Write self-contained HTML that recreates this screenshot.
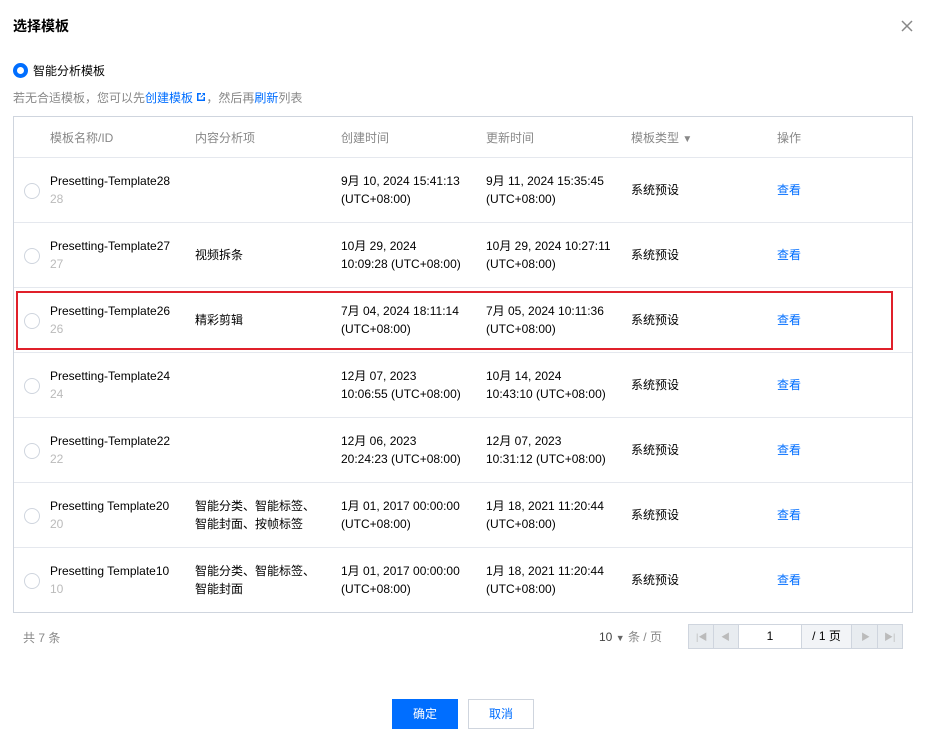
<!DOCTYPE html><html><head><meta charset="utf-8"><style>
*{margin:0;padding:0;box-sizing:border-box}
body{width:930px;height:744px;background:#fff;font-family:"Liberation Sans","Noto Sans CJK SC",sans-serif;font-size:12px;color:#000;position:relative;overflow:hidden}
.a{position:absolute;white-space:nowrap}
.g{color:#888}.b{color:#006eff}
.tbl{position:absolute;left:13px;top:116px;width:900px;height:497px;border:1px solid #cfd5de}
.row{position:absolute;left:0;width:898px;height:65px;border-top:1px solid #e5e8ee}
.row .r{position:absolute;left:10px;top:25px;width:16px;height:16px;border:1px solid #cfd5de;border-radius:50%}
.row .c{position:absolute;line-height:18px;top:14px}
.hd{position:absolute;top:12px;color:#888}
.pg{position:absolute;top:624px;height:25px;border:1px solid #cfd5de;background:#e8ecf0}
</style></head><body>
<div class="a" style="left:13px;top:16px;font-size:14px;font-weight:bold">选择模板</div>
<svg class="a" style="left:901px;top:20px" width="12" height="12" viewBox="0 0 12 12"><path d="M1 1L11 11M11 1L1 11" stroke="#888" stroke-width="1.5"/></svg>
<div class="a" style="left:13px;top:63px;width:15px;height:15px;border-radius:50%;border:4px solid #006eff"></div>
<div class="a" style="left:33px;top:62px">智能分析模板</div>
<div class="a g" style="left:13px;top:89px">若无合适模板，您可以先<span class="b">创建模板 <svg width="10" height="10" viewBox="0 0 10 10"><path d="M1 1h4v1.5H2.5v5h5V5H9v4H1z M6 1h3v3L7.8 2.8 5 5.6 4.4 5 7.2 2.2z" fill="#006eff"/></svg></span>，然后再<span class="b">刷新</span>列表</div>
<div class="tbl">
<div class="hd" style="left:36px">模板名称/ID</div><div class="hd" style="left:181px">内容分析项</div><div class="hd" style="left:327px">创建时间</div><div class="hd" style="left:472px">更新时间</div><div class="hd" style="left:617px">模板类型 <span style="font-size:10px">▼</span></div><div class="hd" style="left:763px">操作</div>
<div class="row" style="top:40px"><div class="r"></div><div class="c" style="left:36px">Presetting-Template28<br><span class="g" style="color:#bbb">28</span></div><div class="c" style="left:327px">9月 10, 2024 15:41:13<br>(UTC+08:00)</div><div class="c" style="left:472px">9月 11, 2024 15:35:45<br>(UTC+08:00)</div><div class="c" style="left:617px;top:23px">系统预设</div><div class="c b" style="left:763px;top:23px">查看</div></div>
<div class="row" style="top:105px"><div class="r"></div><div class="c" style="left:36px">Presetting-Template27<br><span style="color:#bbb">27</span></div><div class="c" style="left:181px;top:23px">视频拆条</div><div class="c" style="left:327px">10月 29, 2024<br>10:09:28 (UTC+08:00)</div><div class="c" style="left:472px">10月 29, 2024 10:27:11<br>(UTC+08:00)</div><div class="c" style="left:617px;top:23px">系统预设</div><div class="c b" style="left:763px;top:23px">查看</div></div>
<div class="row" style="top:170px"><div class="r"></div><div class="c" style="left:36px">Presetting-Template26<br><span style="color:#bbb">26</span></div><div class="c" style="left:181px;top:23px">精彩剪辑</div><div class="c" style="left:327px">7月 04, 2024 18:11:14<br>(UTC+08:00)</div><div class="c" style="left:472px">7月 05, 2024 10:11:36<br>(UTC+08:00)</div><div class="c" style="left:617px;top:23px">系统预设</div><div class="c b" style="left:763px;top:23px">查看</div></div>
<div class="row" style="top:235px"><div class="r"></div><div class="c" style="left:36px">Presetting-Template24<br><span style="color:#bbb">24</span></div><div class="c" style="left:327px">12月 07, 2023<br>10:06:55 (UTC+08:00)</div><div class="c" style="left:472px">10月 14, 2024<br>10:43:10 (UTC+08:00)</div><div class="c" style="left:617px;top:23px">系统预设</div><div class="c b" style="left:763px;top:23px">查看</div></div>
<div class="row" style="top:300px"><div class="r"></div><div class="c" style="left:36px">Presetting-Template22<br><span style="color:#bbb">22</span></div><div class="c" style="left:327px">12月 06, 2023<br>20:24:23 (UTC+08:00)</div><div class="c" style="left:472px">12月 07, 2023<br>10:31:12 (UTC+08:00)</div><div class="c" style="left:617px;top:23px">系统预设</div><div class="c b" style="left:763px;top:23px">查看</div></div>
<div class="row" style="top:365px"><div class="r"></div><div class="c" style="left:36px">Presetting Template20<br><span style="color:#bbb">20</span></div><div class="c" style="left:181px">智能分类、智能标签、<br>智能封面、按帧标签</div><div class="c" style="left:327px">1月 01, 2017 00:00:00<br>(UTC+08:00)</div><div class="c" style="left:472px">1月 18, 2021 11:20:44<br>(UTC+08:00)</div><div class="c" style="left:617px;top:23px">系统预设</div><div class="c b" style="left:763px;top:23px">查看</div></div>
<div class="row" style="top:430px"><div class="r"></div><div class="c" style="left:36px">Presetting Template10<br><span style="color:#bbb">10</span></div><div class="c" style="left:181px">智能分类、智能标签、<br>智能封面</div><div class="c" style="left:327px">1月 01, 2017 00:00:00<br>(UTC+08:00)</div><div class="c" style="left:472px">1月 18, 2021 11:20:44<br>(UTC+08:00)</div><div class="c" style="left:617px;top:23px">系统预设</div><div class="c b" style="left:763px;top:23px">查看</div></div>
</div>
<div class="a" style="left:16px;top:291px;width:877px;height:59px;border:2px solid #e0202a"></div>
<div class="a g" style="left:23px;top:629px">共 7 条</div>
<div class="a" style="left:599px;top:628px;color:#444">10 <span style="font-size:9px;color:#666">▼</span> <span class="g">条 / 页</span></div>
<div class="pg" style="left:688px;width:215px"></div>
<div class="a" style="left:713px;top:625px;width:1px;height:23px;background:#cfd5de"></div>
<div class="a" style="left:738px;top:625px;width:64px;height:23px;background:#fff;border-left:1px solid #cfd5de;border-right:1px solid #cfd5de;text-align:center;line-height:23px">1</div>
<div class="a" style="left:802px;top:625px;width:50px;height:23px;background:#f2f4f7;border-right:1px solid #cfd5de;text-align:center;line-height:23px">/ 1 页</div>
<div class="a" style="left:877px;top:625px;width:1px;height:23px;background:#cfd5de"></div>
<div class="a" style="left:696px;top:630px;font-size:9px;color:#bbb">|◀</div><div class="a" style="left:721px;top:630px;font-size:9px;color:#bbb">◀</div><div class="a" style="left:861px;top:630px;font-size:9px;color:#bbb">▶</div><div class="a" style="left:884px;top:630px;font-size:9px;color:#bbb">▶|</div>
<div class="a" style="left:392px;top:699px;width:66px;height:30px;background:#006eff;color:#fff;text-align:center;line-height:30px">确定</div>
<div class="a" style="left:468px;top:699px;width:66px;height:30px;border:1px solid #cfd5de;color:#006eff;text-align:center;line-height:28px">取消</div>
</body></html>
